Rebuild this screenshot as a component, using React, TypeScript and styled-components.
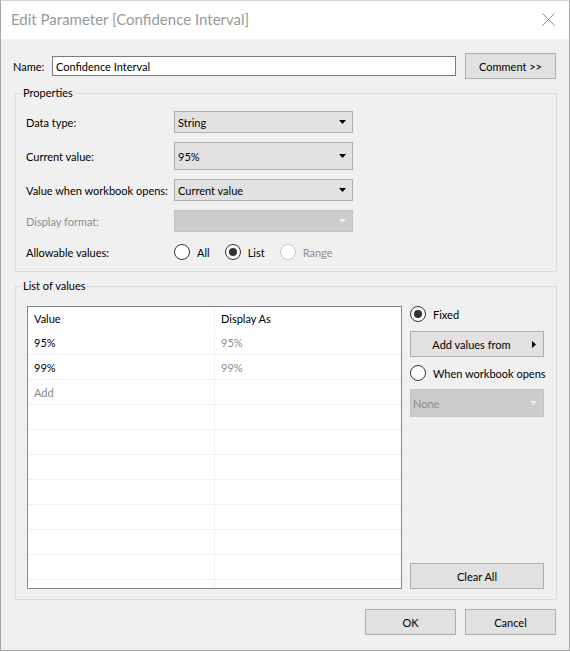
import React from 'react';
import styled, { createGlobalStyle } from 'styled-components';

const GlobalStyle = createGlobalStyle`
  html, body {
    margin: 0;
    padding: 0;
    background: #ffffff;
  }
  body {
    font-family: Lato, 'Open Sans', sans-serif;
    font-size: 11px;
    color: #000;
    white-space: nowrap;
  }
  * {
    box-sizing: border-box;
  }
`;

const Window = styled.div`
  width: 570px;
  height: 651px;
  border: 1px solid #a6a6a6;
  border-top-color: #d4d4d4;
  background: #f0f0f0;
  display: flex;
  flex-direction: column;
`;

const TitleBar = styled.div`
  height: 38px;
  flex: none;
  background: #fff;
  display: flex;
  align-items: center;
  justify-content: space-between;
  padding: 0 14px 2px 10px;
  font-size: 15px;
  color: #999;
`;

const Body = styled.div`
  flex: 1;
  display: flex;
  flex-direction: column;
  padding: 14px 13px 0 12px;
`;

const NameRow = styled.div`
  display: flex;
  align-items: center;
  height: 26px;
`;

const NameLabel = styled.label`
  width: 39px;
  flex: none;
`;

const TextInput = styled.div`
  width: 404px;
  height: 20px;
  border: 1px solid #7a7a7a;
  background: #fff;
  padding-left: 3px;
  display: flex;
  align-items: center;
`;

const Button = styled.div<{ $width?: number }>`
  width: ${(p) => p.$width ?? 91}px;
  height: 26px;
  flex: none;
  border: 1px solid #adadad;
  background: #e1e1e1;
  display: flex;
  align-items: center;
  justify-content: center;
`;

const GroupBox = styled.fieldset<{ $pad: string }>`
  margin: 6px 0 0 2px;
  width: 542px;
  border: 1px solid #dcdcdc;
  padding: ${(p) => p.$pad};
  min-width: 0;
`;

const Legend = styled.legend<{ $offset: number }>`
  margin-left: ${(p) => p.$offset}px;
  padding: 0 2px;
  line-height: 16px;
`;

const PropGrid = styled.div`
  display: grid;
  grid-template-columns: 148px 179px;
  row-gap: 9px;
  align-items: center;
`;

const FieldLabel = styled.div<{ $disabled?: boolean }>`
  color: ${(p) => (p.$disabled ? '#8d8d8d' : '#000')};
`;

const Combo = styled.div<{ $disabled?: boolean; $height?: number }>`
  height: ${(p) => p.$height ?? 22}px;
  border: 1px solid ${(p) => (p.$disabled ? '#c4c4c4' : '#adadad')};
  background: ${(p) => (p.$disabled ? '#cccccc' : '#e1e1e1')};
  color: ${(p) => (p.$disabled ? '#8a8a8a' : '#000')};
  display: flex;
  align-items: center;
  justify-content: space-between;
  padding: 0 6px 0 3px;
`;

const RadioGroup = styled.div`
  display: flex;
  align-items: center;
  gap: 15px;
  height: 22px;
`;

const RadioItem = styled.div<{ $disabled?: boolean }>`
  display: flex;
  align-items: center;
  gap: 7px;
  color: ${(p) => (p.$disabled ? '#8d8d8d' : '#000')};
`;

const RadioCircle = styled.span<{ $checked?: boolean; $disabled?: boolean }>`
  width: 16px;
  height: 16px;
  flex: none;
  border-radius: 50%;
  border: 1px solid ${(p) => (p.$disabled ? '#c8c8c8' : '#333')};
  background: #fff;
  display: flex;
  align-items: center;
  justify-content: center;

  &::after {
    content: '';
    display: ${(p) => (p.$checked ? 'block' : 'none')};
    width: 8px;
    height: 8px;
    border-radius: 50%;
    background: #333;
  }
`;

const ListLayout = styled.div`
  display: flex;
  gap: 8px;
`;

const Table = styled.div`
  width: 375px;
  height: 283px;
  flex: none;
  border: 1px solid #828790;
  background: #fff;
  overflow: hidden;
`;

const TableRow = styled.div<{ $header?: boolean }>`
  display: grid;
  grid-template-columns: 187px 1fr;
  height: ${(p) => (p.$header ? 23 : 25)}px;
  border-bottom: 1px solid ${(p) => (p.$header ? 'transparent' : '#f0f0f0')};
`;

const Cell = styled.div<{ $muted?: boolean; $first?: boolean }>`
  display: flex;
  align-items: center;
  padding-left: 6px;
  color: ${(p) => (p.$muted ? '#8a8a8a' : '#000')};
  border-right: ${(p) => (p.$first ? '1px solid #f0f0f0' : 'none')};
`;

const SidePanel = styled.div`
  width: 134px;
  display: flex;
  flex-direction: column;
`;

const SideButton = styled(Button)`
  width: 134px;
`;

const MenuButton = styled(Button)`
  width: 134px;
  margin: 9px 0 8px;
  padding-right: 7px;

  span {
    flex: 1;
    text-align: center;
  }
`;

const SideCombo = styled(Combo)`
  margin-top: 8px;
  padding-left: 2px;
`;

const Spacer = styled.div`
  flex: 1;
`;

const Footer = styled.div`
  display: flex;
  justify-content: flex-end;
  gap: 9px;
  margin-top: 9px;
`;

const DownArrow = ({ color = '#000' }: { color?: string }) => (
  <svg width="7" height="4" viewBox="0 0 7 4">
    <polygon points="0,0 7,0 3.5,4" fill={color} />
  </svg>
);

const RightArrow = () => (
  <svg width="4" height="7" viewBox="0 0 4 7">
    <polygon points="0,0 4,3.5 0,7" fill="#000" />
  </svg>
);

const CloseIcon = () => (
  <svg width="13" height="13" viewBox="0 0 13 13">
    <path d="M0.5 0.5 L12.5 12.5 M12.5 0.5 L0.5 12.5" stroke="#8c8c8c" strokeWidth="1" />
  </svg>
);

const Radio = ({
  label,
  checked,
  disabled,
}: {
  label: string;
  checked?: boolean;
  disabled?: boolean;
}) => (
  <RadioItem $disabled={disabled}>
    <RadioCircle $checked={checked} $disabled={disabled} />
    {label}
  </RadioItem>
);

const values = [
  { value: '95%', display: '95%' },
  { value: '99%', display: '99%' },
  { value: 'Add', display: '', placeholder: true },
  ...Array.from({ length: 8 }, () => ({ value: '', display: '' })),
];

export default function App() {
  return (
    <>
      <GlobalStyle />
      <Window>
        <TitleBar>
          <span>Edit Parameter [Confidence Interval]</span>
          <CloseIcon />
        </TitleBar>
        <Body>
          <NameRow>
            <NameLabel>Name:</NameLabel>
            <TextInput>Confidence Interval</TextInput>
            <Spacer />
            <Button>Comment &gt;&gt;</Button>
          </NameRow>

          <GroupBox $pad="10px 10px 8px 10px">
            <Legend $offset={-5}>Properties</Legend>
            <PropGrid>
              <FieldLabel>Data type:</FieldLabel>
              <Combo>
                String
                <DownArrow />
              </Combo>
              <FieldLabel>Current value:</FieldLabel>
              <Combo $height={28}>
                95%
                <DownArrow />
              </Combo>
              <FieldLabel>Value when workbook opens:</FieldLabel>
              <Combo>
                Current value
                <DownArrow />
              </Combo>
              <FieldLabel $disabled>Display format:</FieldLabel>
              <Combo $disabled>
                <span />
                <DownArrow color="#eeeeee" />
              </Combo>
              <FieldLabel>Allowable values:</FieldLabel>
              <RadioGroup>
                <Radio label="All" />
                <Radio label="List" checked />
                <Radio label="Range" disabled />
              </RadioGroup>
            </PropGrid>
          </GroupBox>

          <GroupBox $pad="12px 11px 10px 11px">
            <Legend $offset={-6}>List of values</Legend>
            <ListLayout>
              <Table>
                <TableRow $header>
                  <Cell $first>Value</Cell>
                  <Cell>Display As</Cell>
                </TableRow>
                {values.map((row, i) => (
                  <TableRow key={i}>
                    <Cell $first $muted={row.placeholder}>
                      {row.value}
                    </Cell>
                    <Cell $muted>{row.display}</Cell>
                  </TableRow>
                ))}
              </Table>
              <SidePanel>
                <Radio label="Fixed" checked />
                <MenuButton>
                  <span>Add values from</span>
                  <RightArrow />
                </MenuButton>
                <Radio label="When workbook opens" />
                <SideCombo $disabled $height={28}>
                  None
                  <DownArrow color="#eeeeee" />
                </SideCombo>
                <Spacer />
                <SideButton>Clear All</SideButton>
              </SidePanel>
            </ListLayout>
          </GroupBox>

          <Footer>
            <Button>OK</Button>
            <Button>Cancel</Button>
          </Footer>
        </Body>
      </Window>
    </>
  );
}
